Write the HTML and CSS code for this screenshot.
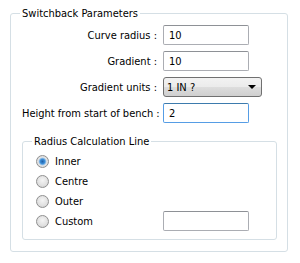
FILE: index.html
```html
<!DOCTYPE html>
<html lang="en">
<head>
    <meta charset="UTF-8">
    <title>Switchback Parameters</title>
    <link rel="stylesheet" href="styles.css">
</head>
<body>
    <fieldset class="group">
        <legend>Switchback Parameters</legend>
        <div class="form-grid">
            <label>Curve radius :</label>
            <input type="text" class="field" value="10">
            <label>Gradient :</label>
            <input type="text" class="field" value="10">
            <label>Gradient units :</label>
            <div class="select">
                <span>1 IN ?</span>
                <span class="arrow"></span>
            </div>
            <label>Height from start of bench :</label>
            <input type="text" class="field focused" value="2">
        </div>
        <fieldset class="group inner">
            <legend>Radius Calculation Line</legend>
            <div class="radio-grid">
                <div class="radio-row"><span class="radio checked"></span>Inner</div>
                <div></div>
                <div class="radio-row"><span class="radio"></span>Centre</div>
                <div></div>
                <div class="radio-row"><span class="radio"></span>Outer</div>
                <div></div>
                <div class="radio-row"><span class="radio"></span>Custom</div>
                <input type="text" class="field" value="">
            </div>
        </fieldset>
    </fieldset>
</body>
</html>
```

FILE: styles.css
```css
body {
    margin: 0;
    padding: 7px 0 0 10px;
    font-family: "DejaVu Sans Condensed", "DejaVu Sans", sans-serif;
    font-size: 11px;
    color: #000;
    background: #fff;
}
.group {
    width: 278px;
    box-sizing: border-box;
    margin: 0;
    padding: 5px 10px 11px 11px;
    border: 1px solid #d5dfe5;
    border-radius: 3px;
}
.group legend {
    padding: 0 2px;
    margin-left: -2px;
    line-height: 13px;
}
.form-grid {
    display: grid;
    grid-template-columns: 135px 86px;
    column-gap: 6px;
    row-gap: 6px;
    align-items: center;
}
.form-grid label {
    text-align: right;
    white-space: nowrap;
}
.field {
    box-sizing: border-box;
    width: 86px;
    height: 20px;
    margin: 0;
    padding: 0 5px;
    font: inherit;
    border: 1px solid #abadb3;
    border-top-color: #8e9196;
    border-radius: 2px;
    background: #fff;
    outline: none;
}
.field.focused {
    border-color: #569de5;
    border-top-color: #3d7bad;
}
.select {
    box-sizing: border-box;
    width: 99px;
    height: 20px;
    display: flex;
    align-items: center;
    justify-content: space-between;
    padding: 0 5px 0 3px;
    border: 1px solid #707070;
    border-radius: 3px;
    background: linear-gradient(#f2f2f2 0%, #ebebeb 50%, #dddddd 51%, #cfcfcf 100%);
}
.arrow {
    width: 0;
    height: 0;
    border-left: 4px solid transparent;
    border-right: 4px solid transparent;
    border-top: 4px solid #000;
}
.inner {
    width: 255px;
    margin-top: 12px;
    padding: 3px 10px 8px 13px;
}
.inner legend {
    margin-left: -4px;
}
.radio-grid {
    display: grid;
    grid-template-columns: 127px 86px;
    grid-auto-rows: 20px;
    align-items: center;
}
.radio-row {
    display: flex;
    align-items: center;
    gap: 6px;
}
.radio {
    box-sizing: border-box;
    width: 13px;
    height: 13px;
    border-radius: 50%;
    border: 1px solid #8f8f8f;
    background: radial-gradient(circle at 50% 40%, #f4f4f4 0%, #e0e0e0 60%, #c9c9c9 100%);
}
.radio.checked {
    background: radial-gradient(circle, #1f5fa8 0%, #3d8fd8 30%, #9cc4e8 45%, #e4e4e4 55%, #d4d4d4 100%);
}
```
